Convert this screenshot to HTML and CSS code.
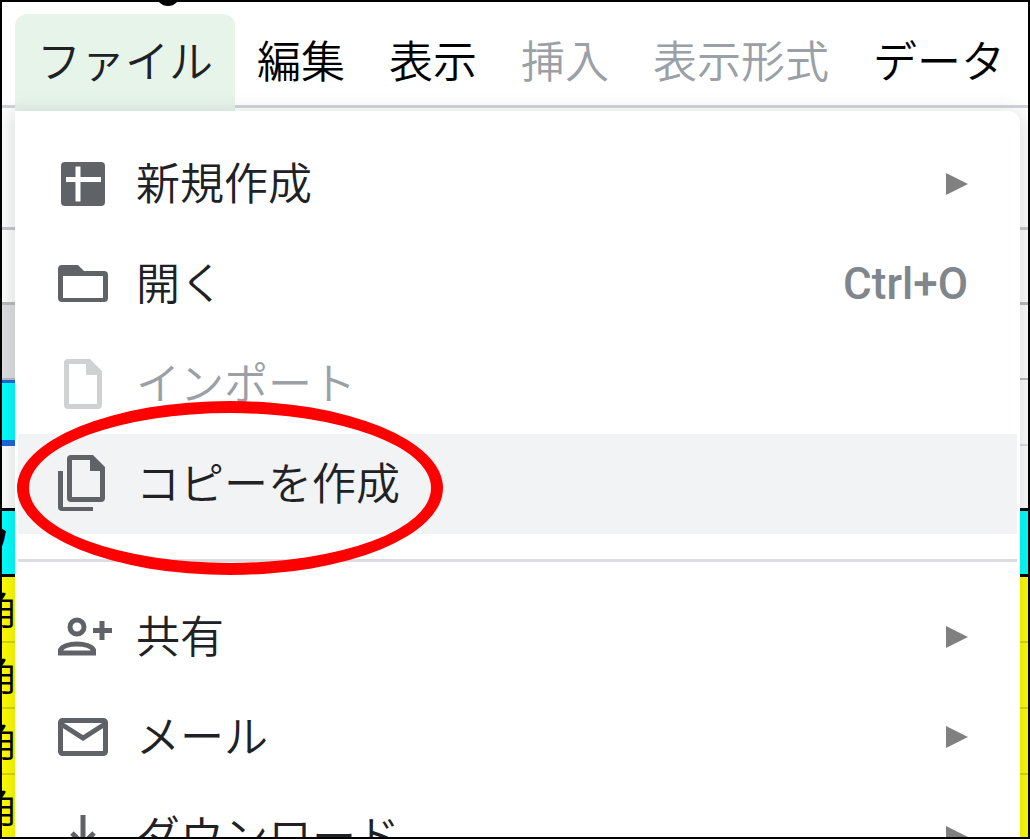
FILE: index.html
```html
<!DOCTYPE html>
<html lang="ja">
<head>
	<meta charset="UTF-8">
	<title>スプレッドシート</title>
	<link rel="stylesheet" href="styles.css">
</head>
<body>
	<div class="window">
		<span class="cursor"></span>
		<nav class="menubar">
			<button type="button" class="tab active">ファイル</button>
			<button type="button" class="tab">編集</button>
			<button type="button" class="tab">表示</button>
			<button type="button" class="tab" disabled>挿入</button>
			<button type="button" class="tab" disabled>表示形式</button>
			<button type="button" class="tab">データ</button>
		</nav>
		<div class="sheet">
			<div class="row tool"></div>
			<div class="row bar"></div>
			<div class="row head"><span></span><span></span></div>
			<div class="row select"><span></span><span></span></div>
			<div class="row blank"></div>
			<div class="row title"><span class="cell">ワ</span></div>
			<div class="row data"><span class="cell">角</span></div>
			<div class="row data"><span class="cell">角</span></div>
			<div class="row data"><span class="cell">角</span></div>
			<div class="row data"><span class="cell">角</span></div>

			<div class="menu">
				<button type="button" class="item">
					<svg class="icon" viewBox="0 0 50 60"><rect x="3" y="8" width="44" height="44" rx="4" fill="#5f6368"/><path d="M20 12.500v35M8 25.500h35" stroke="#fff" stroke-width="5" fill="none"/></svg>
					<span class="label">新規作成</span>
					<span class="arrow"></span>
				</button>
				<button type="button" class="item">
					<svg class="icon" viewBox="0 0 50 60"><path fill="#5f6368" fill-rule="evenodd" d="M4 11h16l6 6h20q4 0 4 4v23q0 4-4 4H4q-4 0-4-4V15q0-4 4-4zM5 22v22h40V22z"/></svg>
					<span class="label">開く</span>
					<span class="keys">Ctrl+O</span>
				</button>
				<button type="button" class="item" disabled>
					<svg class="icon" viewBox="0 0 50 60"><path fill="#d0d1d2" fill-rule="evenodd" d="M10 5h22l12 12v34q0 4-4 4H10q-4 0-4-4V9q0-4 4-4zM11 10v40h28V21H28V10z"/></svg>
					<span class="label">インポート</span>
				</button>
				<button type="button" class="item hover">
					<svg class="icon" viewBox="0 0 50 60"><path fill="#5f6368" fill-rule="evenodd" d="M13 1h22l12 12v31q0 4-4 4H13q-4 0-4-4V5q0-4 4-4zM14 6v37h28V17H32V6z"/><path fill="#5f6368" d="M0 17h5v36h30v4H4q-4 0-4-4z"/></svg>
					<span class="label">コピーを作成</span>
				</button>
				<hr class="line">
				<button type="button" class="item">
					<svg class="icon" viewBox="0 0 50 60"><g fill="none" stroke="#5f6368" stroke-width="5"><circle cx="19" cy="20" r="7"/><path d="M2.500 46v-3c3-8 30-8 33 0v3z"/><path d="M35 23.500h19M44 14v19"/></g></svg>
					<span class="label">共有</span>
					<span class="arrow"></span>
				</button>
				<button type="button" class="item">
					<svg class="icon" viewBox="0 0 50 60"><g fill="none" stroke="#5f6368" stroke-width="5"><rect x="2.500" y="13.500" width="45" height="33" rx="2"/><path d="M3 17l22 14 22-14"/></g></svg>
					<span class="label">メール</span>
					<span class="arrow"></span>
				</button>
				<button type="button" class="item">
					<svg class="icon" viewBox="0 0 50 60"><path fill="none" stroke="#5f6368" stroke-width="5" d="M25 8v30M14 26l11 11 11-11M7 40v10h36V40"/></svg>
					<span class="label">ダウンロード</span>
					<span class="arrow"></span>
				</button>
			</div>
		</div>
		<div class="mark"></div>
	</div>
</body>
</html>
```

FILE: styles.css
```css
*{
	margin: 0;
	padding: 0;
	box-sizing: border-box;
}
body{
	font-family: "Noto Sans CJK JP", sans-serif;
	font-weight: 350;
	color: #202124;
}
button{
	border: 0;
	background: none;
	font: inherit;
	color: inherit;
	text-align: left;
	white-space: nowrap;
}
.window{
	position: relative;
	display: flex;
	flex-direction: column;
	height: 100vh;
	border: 2px solid #000;
	background: #fff;
	overflow: hidden;
}
.cursor{
	position: absolute;
	left: 154px;
	top: -20px;
	width: 24px;
	height: 24px;
	border-radius: 50%;
	background: #000;
}
.menubar{
	display: flex;
	flex: none;
	padding: 12px 0 0 13px;
	border-bottom: 3px solid #d0d3d8;
}
.tab{
	height: 97px;
	margin-bottom: -6px;
	padding: 0 22px 8px;
	font-size: 44px;
	line-height: 64px;
	color: #000;
}
.tab.active{
	border-radius: 12px 12px 0 0;
	background: #e6f4ea;
	color: #202124;
}
.tab:disabled,
.item:disabled{
	color: #9aa0a6;
}
.sheet{
	position: relative;
	flex: 1;
}
.row{
	display: flex;
	justify-content: space-between;
	height: 66px;
	overflow: hidden;
}
.tool{
	height: 122px;
	border-bottom: 3px solid #c6c8cc;
}
.bar{
	height: 75px;
	border-bottom: 3px solid #bbb;
}
.head{
	height: 75px;
	border-bottom: 2px solid #bbb;
}
.head span,
.select span{
	width: 50%;
}
.head span:first-child{
	background: #dfe0e5;
}
.select span:first-child{
	border: solid #1a66e0;
	border-width: 3px 0 6px;
	background: #0ff;
}
.select span:last-child{
	border-bottom: 2px solid #ddd;
}
.blank{
	height: 62px;
}
.title{
	height: 69px;
	border: solid #000;
	border-width: 3px 0;
	background: #0ff;
}
.data{
	border-bottom: 2px solid #d9d900;
	background: #ff0;
}
.cell{
	margin-left: -24px;
	font-size: 40px;
	line-height: 60px;
	color: #000;
}
.title .cell{
	margin-left: -32px;
	font-weight: bold;
}
.menu{
	position: absolute;
	top: 3px;
	left: 13px;
	right: 8px;
	padding: 23px 3px;
	border-radius: 0 12px 12px 12px;
	background: #fff;
	box-shadow: 0 6px 18px 6px rgba(60,64,67,.15);
}
.item{
	display: flex;
	align-items: center;
	width: 100%;
	height: 100px;
	padding: 0 49px 0 40px;
	font-size: 44px;
	line-height: 64px;
}
.item.hover{
	background: #f1f3f4;
}
.icon{
	width: 50px;
	height: 60px;
	margin-right: 28px;
	overflow: visible;
}
.label{
	flex: 1;
	padding-bottom: 6px;
}
.keys{
	font-family: Roboto, sans-serif;
	font-weight: 500;
	color: #80868b;
}
.arrow{
	border: solid transparent;
	border-width: 11px 0 11px 22px;
	border-left-color: #808080;
}
.line{
	margin: 25px 0;
	border: 0;
	border-top: 3px solid #dadce0;
}
.mark{
	position: absolute;
	left: 15px;
	top: 399px;
	width: 426px;
	height: 174px;
	border: 12px solid #f00;
	border-radius: 50%;
}
```
